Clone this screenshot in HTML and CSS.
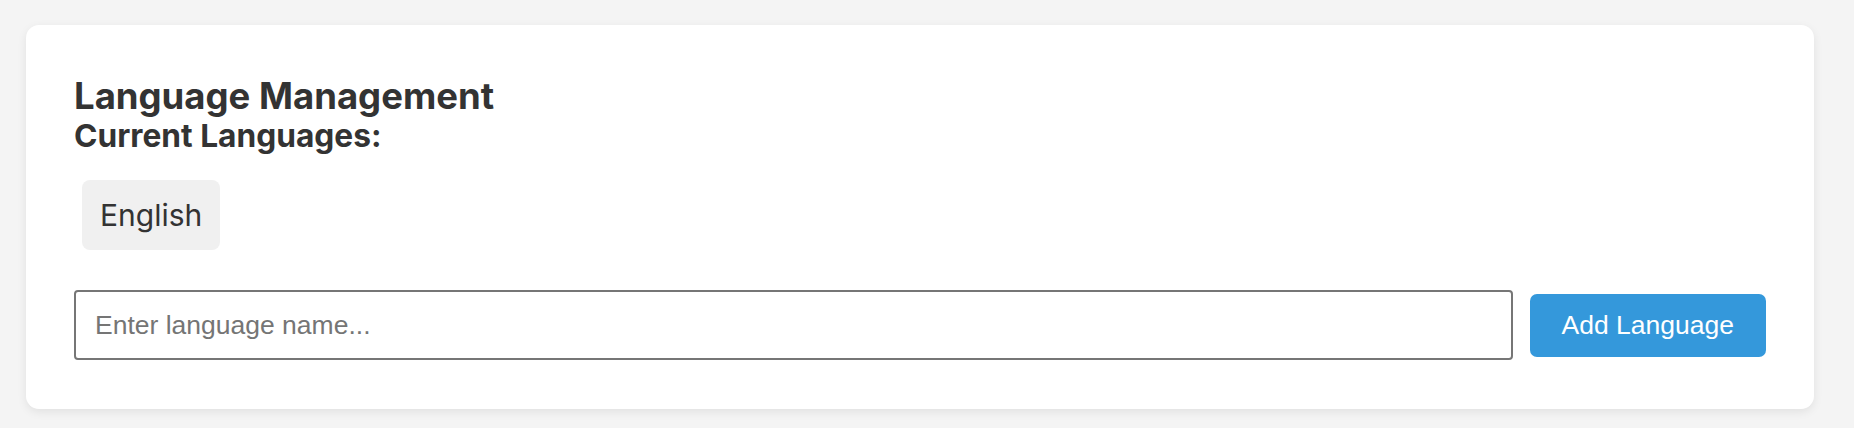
FILE: index.html
```html
<!DOCTYPE html>
<html lang="en">

<head>
    <meta charset="UTF-8">
    <meta name="viewport" content="width=device-width, initial-scale=1.0">
    <title>Language Management</title>
    <link rel="stylesheet" href="styles.css">
</head>

<body>

    <div class="card">
        <h2 class="title">Language Management</h2>
        <h3 class="subtitle">Current Languages:</h3>

        <ul class="language-list">
            <li class="language-chip">English</li>
        </ul>

        <div class="add-row">
            <input type="text" class="language-input" placeholder="Enter language name...">
            <button class="btn">Add Language</button>
        </div>
    </div>

</body>

</html>
```

FILE: styles.css
```css
body {
    margin: 0;
    padding: 25px 40px 20px 26px;
    background-color: #f4f4f4;
    font-family: Inter, "Noto Sans", sans-serif;
    color: #333;
}

.card {
    background-color: #fff;
    border-radius: 13px;
    box-shadow: 0 3px 10px rgba(0, 0, 0, 0.08);
    padding: 48px 48px 49px 48px;
}

.title {
    margin: 0;
    font-size: 36.5px;
    font-weight: 700;
    line-height: 46px;
}

.subtitle {
    margin: 0;
    font-size: 31.7px;
    font-weight: 700;
    line-height: 34px;
}

.language-list {
    list-style: none;
    margin: 27px 0 40px 8px;
    padding: 0;
    display: flex;
    gap: 12px;
}

.language-chip {
    background-color: #f0f0f0;
    border-radius: 8px;
    padding: 0 18px;
    height: 70px;
    line-height: 70px;
    font-size: 30px;
}

.add-row {
    display: flex;
    align-items: center;
    gap: 17px;
}

.language-input {
    flex: 1;
    height: 70px;
    box-sizing: border-box;
    border: 2px solid #767676;
    border-radius: 4px;
    padding: 0 19px;
    font-family: "Liberation Sans", Arial, sans-serif;
    font-size: 26.5px;
    color: #333;
}

.language-input::placeholder {
    color: #757575;
}

.btn {
    height: 63px;
    padding: 0 32px;
    border: none;
    border-radius: 7px;
    background-color: #3498db;
    color: #fff;
    font-family: "Liberation Sans", Arial, sans-serif;
    font-size: 26.5px;
    cursor: pointer;
}

.btn:hover {
    background-color: #2980b9;
}
```
